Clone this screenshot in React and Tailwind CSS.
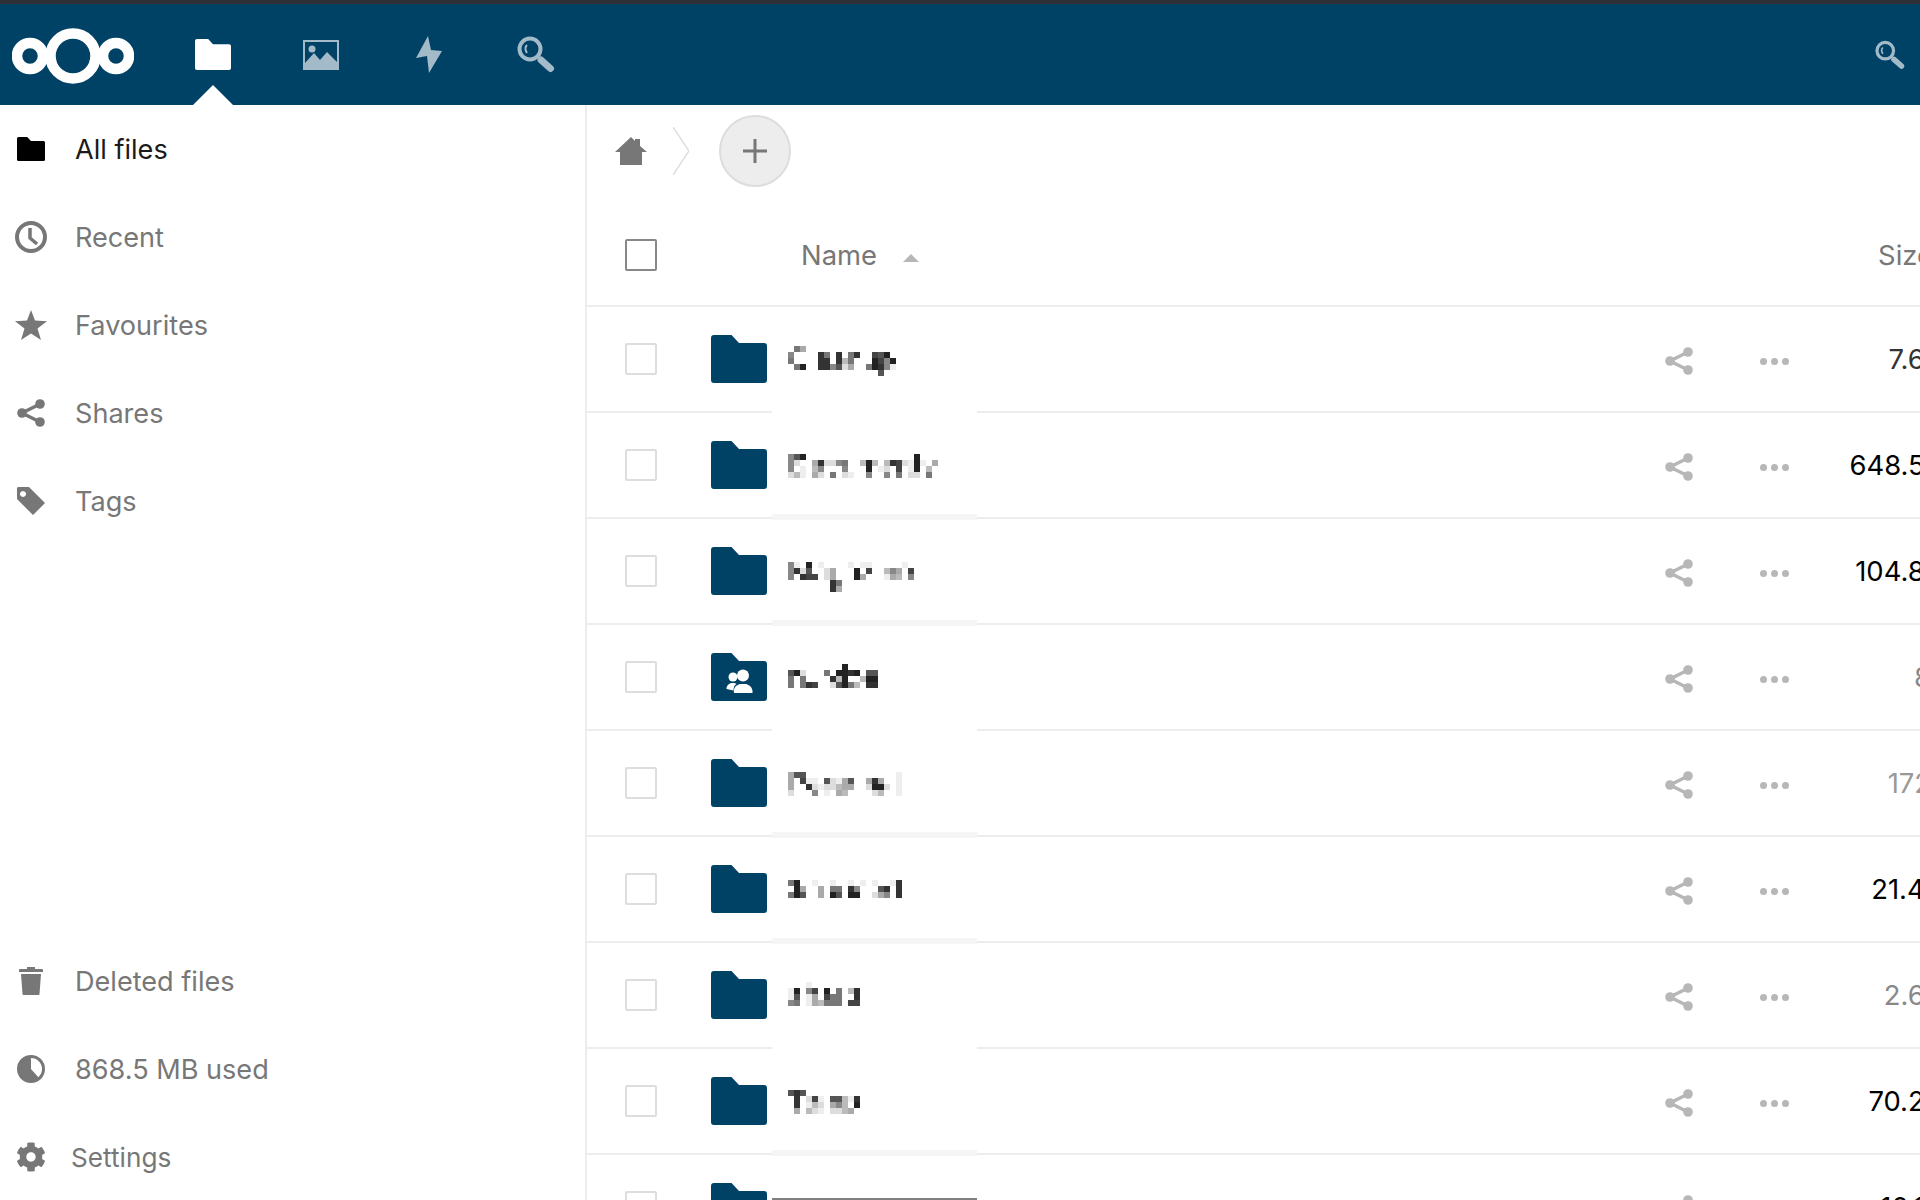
import { FaCog } from "react-icons/fa";

const FOLDER = "M3 0H20.5L28 8H53a3 3 0 0 1 3 3V45a3 3 0 0 1-3 3H3a3 3 0 0 1-3-3V3a3 3 0 0 1 3-3z";
const SHADES = { 0: "#222", 1: "#333", 2: "#444", 3: "#555", 4: "#777", 5: "#888", 6: "#aaa", 7: "#bbb", 8: "#ddd", 9: "#eee" };

const rows = [
  { size: "7.6 MB", color: "text-[#333]", patch: "white", y: 39, blur: [".46", "5....14.1.41..230", "4....11.174...0250", ".40..115386..40159", "...............3"] },
  { size: "648.5 MB", color: "text-black", patch: "band", y: 41, blur: ["530..................0", "58..618854..707.7128909.6", "5.9.75...5...0.98.2.90.7", "879.68.4.89..5..5.4.88.4"] },
  { size: "104.8 MB", color: "text-black", patch: "band", y: 43, blur: ["59.0.9....9.99.....9", "5183..86...0.2..756.2", "5.122.86...06...967.5", ".......14", ".......16"] },
  { size: "8 KB", color: "text-[#888]", patch: "white", y: 39, group: true, blur: [".........0", "308...4.0010.33", "4.4....170..700", "4.412..83047.11"] },
  { size: "172 KB", color: "text-[#999]", patch: "band", y: 41, blur: ["633...............9", "6.299.38963..616..9", "6..18988766..8008.9", "8...5.9.67....87..9"] },
  { size: "21.4 MB", color: "text-black", patch: "band", y: 43, blur: ["40..9..9..9.9.9..91", ".06..6.44.15...31.1", "403..6.03.00..865.1"] },
  { size: "2.6 MB", color: "text-[#888]", patch: "white", y: 39, blur: ["...9", "90.52.0.4.71", "93.96.244..1", "54.967444.22"] },
  { size: "70.2 MB", color: "text-black", patch: "band", y: 41, blur: ["313", ".1.829.33791", ".1.978.657.0", ".6.789.8876"] },
  { size: "10.1 MB", color: "text-black", blur: [] },
];

function Folder({ className, group }) {
  return (
    <svg viewBox="0 0 56 48" className={className} preserveAspectRatio="none">
      <path d={FOLDER} fill="currentColor" />
      {group && (
        <g fill="#fff">
          <circle cx="22" cy="24" r="4.5" />
          <path d="M15.5 36c0-4 3-5.5 5-6h3l2 1c-2 1-3 3-3 6.500z" />
          <circle cx="32" cy="22.500" r="6" />
          <path d="M23 40c-1-5 2-8 6-9h6c4 1 7 4 6.500 9z" />
        </g>
      )}
    </svg>
  );
}

function Share({ className }) {
  return (
    <svg viewBox="0 0 28 28" className={className}>
      <g fill="currentColor" stroke="currentColor">
        <path d="M23 5L5 14L23 23" fill="none" strokeWidth="3.500" />
        <circle cx="5" cy="14" r="4.800" strokeWidth="0" />
        <circle cx="23" cy="5" r="4.800" strokeWidth="0" />
        <circle cx="23" cy="23" r="4.800" strokeWidth="0" />
      </g>
    </svg>
  );
}

function Search({ className }) {
  return (
    <svg viewBox="0 0 38 37" className={className} fill="none" stroke="currentColor">
      <circle cx="13" cy="13" r="10.500" strokeWidth="4" />
      <path d="M24 24L33.500 32.500" strokeWidth="7" strokeLinecap="round" />
      <path d="M10 9c-2 2-2 5 0 8" strokeWidth="2" />
    </svg>
  );
}

function Mosaic({ data, y }) {
  return (
    <svg width="180" height="60" className="shrink-0">
      {data.map((line, r) =>
        line.split("").map((c, i) =>
          c === "." ? null : <rect key={r + "-" + i} x={i * 6} y={y - 22 + r * 6} width="6" height="6" fill={SHADES[c]} />
        )
      )}
    </svg>
  );
}

function Row({ row, last }) {
  return (
    <div className="relative flex items-center h-[106px] w-[1388px] pl-[38px] border-b-2 border-[#ededed]">
      <div className="w-8 h-8 shrink-0 border-2 border-[#ddd] rounded-[2px] bg-white"></div>
      <Folder className="w-14 h-12 ml-[54px] shrink-0 text-[#004166]" group={row.group} />
      <div className="ml-[21px] w-[180px] shrink-0">
        <Mosaic data={row.blur} y={row.y || 0} />
      </div>
      <div className="flex-1"></div>
      <Share className="w-7 h-7 mt-1 shrink-0 text-[#b7b7b7]" />
      <div className="flex gap-1 ml-[67px] mt-1 w-[31px] shrink-0">
        <span className="w-[7px] h-[7px] rounded-full bg-[#b7b7b7]"></span>
        <span className="w-[7px] h-[7px] rounded-full bg-[#b7b7b7]"></span>
        <span className="w-[7px] h-[7px] rounded-full bg-[#b7b7b7]"></span>
      </div>
      <div className={"w-[184px] shrink-0 mt-[2px] text-right whitespace-nowrap text-[27.4px] " + row.color}>{row.size}</div>
      {row.patch === "white" && <div className="absolute left-[185px] w-[205px] -bottom-[2px] h-[2px] bg-white"></div>}
      {row.patch === "band" && <div className="absolute z-10 left-[185px] w-[205px] -bottom-[3px] h-[6px] bg-[#f5f5f5]"></div>}
      {last && <div className="absolute left-[185px] w-[205px] top-[43px] h-[4px] bg-[#808080]"></div>}
    </div>
  );
}

function NavItem({ icon, label, active, small }) {
  return (
    <li className={"flex items-center h-[88px] " + (active ? "text-[#1a1a1a]" : "text-[#777]")}>
      <span className={"w-[62px] flex justify-center shrink-0 " + (active ? "text-black" : "text-[#777]")}>{icon}</span>
      <span className={small ? "ml-[9px] mt-[2px] text-[26.2px]" : "ml-[13px] mt-[2px] text-[27.1px]"}>{label}</span>
    </li>
  );
}

export default function App() {
  return (
    <div className="h-[1200px] overflow-hidden bg-white flex flex-col font-['Inter',sans-serif]">
      <div className="h-1 bg-[#2d3136] shrink-0"></div>

      {/* top bar */}
      <header className="relative flex items-center h-[101px] shrink-0 bg-[#004166] text-[#a3bac9]">
        <svg viewBox="0 0 122 56" className="w-[122px] h-14 ml-3 mt-[3px] shrink-0" fill="none" stroke="#fff">
          <circle cx="61" cy="28" r="22.500" strokeWidth="10.500" />
          <circle cx="18" cy="28" r="13" strokeWidth="10.500" />
          <circle cx="104" cy="28" r="13" strokeWidth="10.500" />
        </svg>
        <Folder className="w-9 h-[31px] ml-[61px] shrink-0 text-white" />
        <svg viewBox="0 0 36 30" className="w-9 h-[30px] ml-[72px] shrink-0">
          <path d="M1 1H35V29H1z" fill="none" stroke="currentColor" strokeWidth="2" />
          <path d="M2 28V23L11 13L17 20L24 12L34 22V28z" fill="currentColor" />
          <circle cx="9" cy="9" r="3.500" fill="currentColor" />
        </svg>
        <svg viewBox="0 0 26 37" className="w-[26px] h-[37px] ml-[77px] shrink-0">
          <path d="M12 0L0 22L11 20L13 37L26 15L15 14z" fill="currentColor" />
        </svg>
        <Search className="w-[38px] h-[37px] ml-[75px] shrink-0" />
        <Search className="w-[30px] h-[30px] ml-auto mr-[15px] shrink-0" />
        <svg viewBox="0 0 40 20" className="absolute left-[193px] bottom-0 w-10 h-5">
          <path d="M0 20L20 0L40 20z" fill="#fff" />
        </svg>
      </header>

      <div className="flex flex-1 min-h-0">
        {/* sidebar */}
        <aside className="w-[587px] shrink-0 border-r-2 border-[#ededed] flex flex-col justify-between">
          <ul>
            <NavItem
              active
              label="All files"
              icon={<Folder className="w-7 h-6" />}
            />
            <NavItem
              label="Recent"
              icon={
                <svg viewBox="0 0 32 32" className="w-8 h-8" fill="none" stroke="currentColor">
                  <circle cx="16" cy="16" r="14" strokeWidth="4" />
                  <path d="M15 7V17L22 23" strokeWidth="3.500" />
                </svg>
              }
            />
            <NavItem
              label="Favourites"
              icon={
                <svg viewBox="0 0 32 30" className="w-8 h-[30px]">
                  <path d="M16 0L20 10.500L32 11.200L22.500 18.500L26 30L16 23.500L6 30L9.500 18.500L0 11.200L12 10.500z" fill="currentColor" />
                </svg>
              }
            />
            <NavItem label="Shares" icon={<Share className="w-7 h-7" />} />
            <NavItem
              label="Tags"
              icon={
                <svg viewBox="0 0 28 28" className="w-7 h-7">
                  <path fillRule="evenodd" d="M1 0H12L28 16L16 28L0 12V1zM6 4a3 3 0 1 0 .01 0z" fill="currentColor" />
                </svg>
              }
            />
          </ul>
          <ul className="-mb-px">
            <NavItem
              label="Deleted files"
              icon={
                <svg viewBox="0 0 24 28" className="w-6 h-7">
                  <path d="M8 0H16V2H23a1 1 0 0 1 1 1V5H0V3a1 1 0 0 1 1-1H8zM2 7H22L20.500 27a1 1 0 0 1-1 1H4.500a1 1 0 0 1-1-1z" fill="currentColor" />
                </svg>
              }
            />
            <NavItem
              label="868.5 MB used"
              icon={
                <svg viewBox="0 0 28 28" className="w-7 h-7">
                  <circle cx="14" cy="14" r="12.500" fill="none" stroke="currentColor" strokeWidth="3" />
                  <path d="M14 14V2A12 12 0 1 0 22 23z" fill="currentColor" />
                </svg>
              }
            />
            <NavItem small label="Settings" icon={<FaCog className="w-[30px] h-[30px]" />} />
          </ul>
        </aside>

        {/* file list */}
        <main className="flex-1 min-w-0 overflow-hidden">
          <div className="flex items-center h-[92px] pl-[28px]">
            <svg viewBox="0 0 32 28" className="w-8 h-7 shrink-0">
              <path d="M0 15L16 0L20 4V2H25V9L32 15H27V28H5V15z" fill="#777" />
            </svg>
            <svg viewBox="0 0 16 48" className="w-4 h-12 ml-[26px] shrink-0" fill="none">
              <path d="M0 0L16 24L0 48" stroke="#ddd" strokeWidth="1.500" />
            </svg>
            <div className="w-[72px] h-[72px] ml-[30px] shrink-0 rounded-full bg-[#ededed] border-2 border-[#ddd] flex items-center justify-center">
              <svg viewBox="0 0 24 24" className="w-6 h-6">
                <path d="M12 0V24M0 12H24" stroke="#777" strokeWidth="3" />
              </svg>
            </div>
          </div>

          <div className="flex items-center h-[110px] w-[1388px] pt-2 pl-[38px] pr-[42px] border-b-2 border-[#ededed] text-[27.4px] text-[#777]">
            <div className="w-8 h-8 shrink-0 border-2 border-[#888] rounded-[2px]"></div>
            <span className="ml-[144px] mt-[2px]">Name</span>
            <svg viewBox="0 0 16 8" className="w-4 h-2 ml-[26px] mt-[5px] shrink-0">
              <path d="M0 8L8 0L16 8z" fill="#b7b7b7" />
            </svg>
            <span className="ml-auto mt-[2px]">Size</span>
          </div>

          {rows.map((row, i) => (
            <Row key={i} row={row} last={i === rows.length - 1} />
          ))}
        </main>
      </div>
    </div>
  );
}
